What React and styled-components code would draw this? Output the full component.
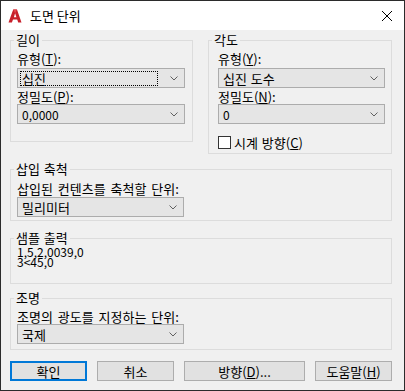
import React from 'react';
import styled, { createGlobalStyle } from 'styled-components';

const Global = createGlobalStyle`
  html, body { margin: 0; padding: 0; background: #ffffff; }
  body {
    font-family: "Noto Sans CJK KR", "Noto Sans", sans-serif;
    font-size: 13px;
    color: #000;
  }
  * { box-sizing: border-box; }
`;

const Window = styled.div`
  width: 405px;
  height: 391px;
  border: 1px solid #2b2b2b;
  background: #f0f0f0;
  display: flex;
  flex-direction: column;
`;

const TitleBar = styled.div`
  height: 29px;
  flex: none;
  background: #ffffff;
  display: flex;
  align-items: center;
  padding-left: 7px;
`;

const Title = styled.span`
  margin-left: 8px;
  font-size: 13px;
  line-height: 16px;
`;

const CloseBtn = styled.div`
  margin-left: auto;
  margin-right: 12px;
  width: 10px;
  height: 10px;
  display: flex;
`;

const Body = styled.div`
  flex: 1;
  padding: 3px 12px 0 9px;
  display: flex;
  flex-direction: column;
`;

const TopRow = styled.div`
  display: flex;
  align-items: flex-start;
  gap: 15px;
`;

const Group = styled.fieldset`
  margin: ${p => p.$mt || 0}px 0 0 0;
  padding: 0;
  border: 1px solid #dcdcdc;
  min-width: 0;
  width: ${p => (p.$w ? `${p.$w}px` : 'auto')};
`;

const Legend = styled.legend`
  margin-left: 3px;
  padding: 0 2px;
  font-size: 13px;
  line-height: 14px;
  word-spacing: 1px;
`;

const Content = styled.div`
  display: flex;
  flex-direction: column;
  align-items: flex-start;
  padding: ${p => p.$pt}px ${p => p.$pr}px ${p => p.$pb}px ${p => p.$pl}px;
`;

const Label = styled.div`
  line-height: 15px;
  margin-top: ${p => p.$mt || 0}px;
  white-space: nowrap;
  word-spacing: 2px;
`;

const Key = styled.span`
  text-decoration: underline;
  text-underline-offset: 1px;
`;

const SelectBox = styled.div`
  width: ${p => (p.$w ? `${p.$w}px` : '100%')};
  align-self: ${p => (p.$w ? 'flex-start' : 'stretch')};
  height: 20px;
  margin-top: ${p => p.$mt || 0}px;
  background: #e5e5e5;
  border: 1px solid #acacac;
  display: flex;
  align-items: center;
  padding: 2px 6px 1px 2px;
`;

const SelectValue = styled.div`
  flex: 1;
  height: 15px;
  line-height: 13px;
  padding-left: 1px;
  font-size: ${p => (p.$num ? 12 : 13)}px;
  border: 1px ${p => (p.$focus ? 'dotted #000' : 'solid transparent')};
  margin-right: 12px;
  word-spacing: 1px;
`;

const Chevron = () => (
  <svg width="8" height="5" viewBox="0 0 8 5">
    <polyline points="0.5,0.5 4,4 7.5,0.5" fill="none" stroke="#606060" strokeWidth="1" />
  </svg>
);

const Select = ({ value, focus, w, mt, num }) => (
  <SelectBox $w={w} $mt={mt}>
    <SelectValue $focus={focus} $num={num}>{value}</SelectValue>
    <Chevron />
  </SelectBox>
);

const CheckRow = styled.div`
  display: flex;
  align-items: center;
  gap: 3px;
  margin-top: ${p => p.$mt || 0}px;
  line-height: 15px;
  word-spacing: 1px;
`;

const CheckBox = styled.span`
  width: 13px;
  height: 13px;
  background: #fff;
  border: 1px solid #333;
  display: inline-block;
`;

const Sample = styled.div`
  line-height: 10px;
  font-size: 12px;
  white-space: pre;
`;

const ButtonRow = styled.div`
  display: flex;
  justify-content: space-between;
  margin-top: 11px;
`;

const Button = styled.div`
  width: ${p => p.$w}px;
  height: 20px;
  background: #e1e1e1;
  border: ${p => (p.$default ? '2px solid #0078d7' : '1px solid #adadad')};
  display: flex;
  align-items: center;
  justify-content: center;
  line-height: 15px;
`;

const AppIcon = () => (
  <svg width="14" height="14" viewBox="0 0 14 14">
    <path
      fillRule="evenodd"
      d="M0.5 13.5 L5.2 0.5 L9 0.5 L13.5 13.5 L10.2 13.5 L9.2 10.5 L5 10.5 L3.9 13.5 Z M5.9 8.2 L8.4 8.2 L7.1 4.3 Z"
      fill="#c7202b"
    />
    <path d="M5.2 0.5 L9 0.5 L7.1 4.3 Z" fill="#e2434b" />
  </svg>
);

const CloseIcon = () => (
  <svg width="10" height="10" viewBox="0 0 10 10">
    <path d="M0 0 L10 10 M10 0 L0 10" stroke="#000" strokeWidth="1" />
  </svg>
);

export default function App() {
  return (
    <>
      <Global />
      <Window>
        <TitleBar>
          <AppIcon />
          <Title>도면 단위</Title>
          <CloseBtn>
            <CloseIcon />
          </CloseBtn>
        </TitleBar>
        <Body>
          <TopRow>
            <Group $w={183}>
              <Legend>길이</Legend>
              <Content $pt={4} $pr={7} $pb={17} $pl={6}>
                <Label>유형(<Key>T</Key>):</Label>
                <Select value="십진" focus mt={2} />
                <Label $mt={1}>정밀도(<Key>P</Key>):</Label>
                <Select value="0,0000" num />
              </Content>
            </Group>
            <Group $w={184}>
              <Legend>각도</Legend>
              <Content $pt={4} $pr={6} $pb={3} $pl={9}>
                <Label>유형(<Key>Y</Key>):</Label>
                <Select value="십진 도수" mt={2} />
                <Label $mt={1}>정밀도(<Key>N</Key>):</Label>
                <Select value="0" num />
                <CheckRow $mt={11}>
                  <CheckBox />
                  <span>시계 방향(<Key>C</Key>)</span>
                </CheckRow>
              </Content>
            </Group>
          </TopRow>
          <Group $mt={8}>
            <Legend>삽입 축척</Legend>
            <Content $pt={5} $pr={6} $pb={3} $pl={6}>
              <Label>삽입된 컨텐츠를 축척할 단위:</Label>
              <Select value="밀리미터" w={167} mt={1} />
            </Content>
          </Group>
          <Group $mt={10}>
            <Legend>샘플 출력</Legend>
            <Content $pt={2} $pr={6} $pb={16} $pl={6}>
              <Sample>{'1,5,2,0039,0\n3<45,0'}</Sample>
            </Content>
          </Group>
          <Group $mt={7}>
            <Legend>조명</Legend>
            <Content $pt={4} $pr={6} $pb={5} $pl={6}>
              <Label>조명의 광도를 지정하는 단위:</Label>
              <Select value="국제" w={167} />
            </Content>
          </Group>
          <ButtonRow>
            <Button $w={77} $default>확인</Button>
            <Button $w={77}>취소</Button>
            <Button $w={121}>방향(<Key>D</Key>)...</Button>
            <Button $w={77}>도움말(<Key>H</Key>)</Button>
          </ButtonRow>
        </Body>
      </Window>
    </>
  );
}
